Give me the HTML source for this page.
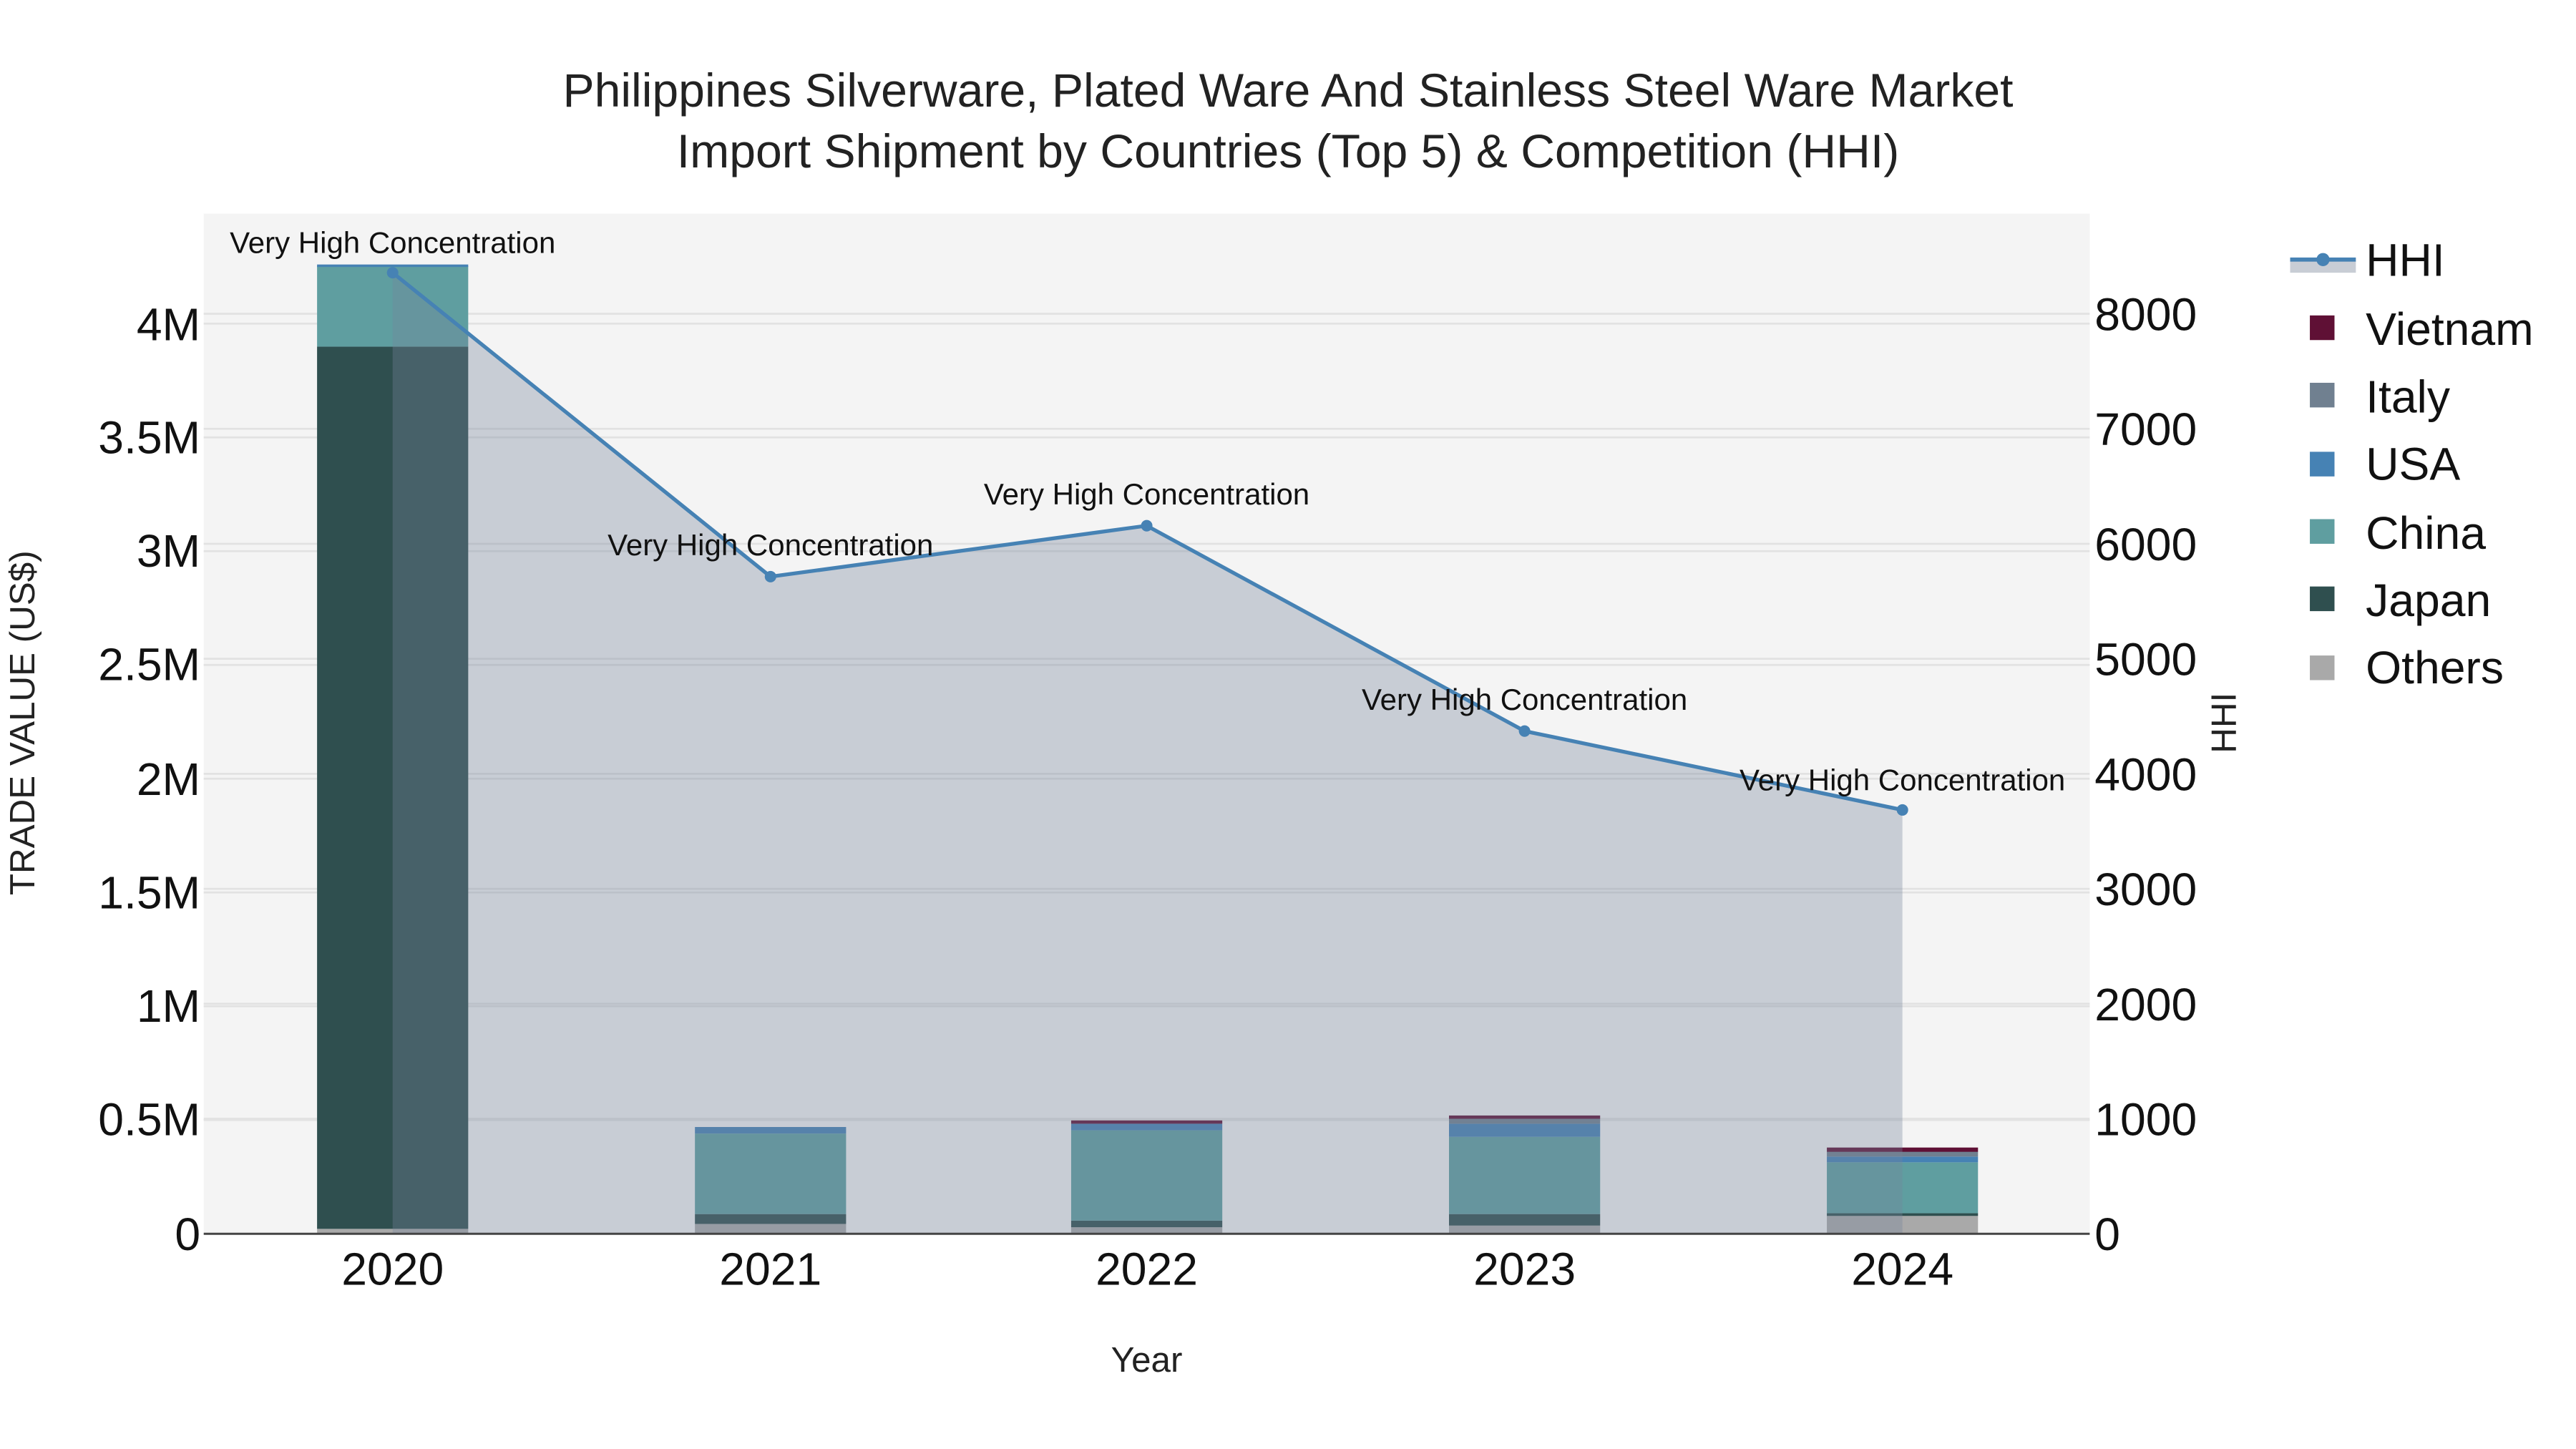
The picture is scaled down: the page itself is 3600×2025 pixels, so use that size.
<!DOCTYPE html>
<html><head><meta charset="utf-8"><style>html,body{margin:0;padding:0;background:#fff}svg{display:block}</style></head>
<body>
<svg width="3600" height="2025" viewBox="0 0 1568 882" xmlns="http://www.w3.org/2000/svg" font-family="Liberation Sans, sans-serif">
<rect width="1568" height="882" fill="#fff"/>
<rect x="124" y="130" width="1148" height="621" fill="#f4f4f4"/>
<g stroke="#e2e2e2" stroke-width="1.2">
<line x1="124" x2="1272" y1="681.75" y2="681.75"/><line x1="124" x2="1272" y1="612.5" y2="612.5"/><line x1="124" x2="1272" y1="543.25" y2="543.25"/><line x1="124" x2="1272" y1="474" y2="474"/><line x1="124" x2="1272" y1="404.75" y2="404.75"/><line x1="124" x2="1272" y1="335.5" y2="335.5"/><line x1="124" x2="1272" y1="266.25" y2="266.25"/><line x1="124" x2="1272" y1="197" y2="197"/>
<line x1="124" x2="1272" y1="681" y2="681"/><line x1="124" x2="1272" y1="611" y2="611"/><line x1="124" x2="1272" y1="541" y2="541"/><line x1="124" x2="1272" y1="471" y2="471"/><line x1="124" x2="1272" y1="401" y2="401"/><line x1="124" x2="1272" y1="331" y2="331"/><line x1="124" x2="1272" y1="261" y2="261"/><line x1="124" x2="1272" y1="191" y2="191"/>
</g>
<g>
<rect x="193" y="748" width="92" height="3" fill="#a9a9a9"/>
<rect x="193" y="211" width="92" height="537" fill="#2f4f4f"/>
<rect x="193" y="162" width="92" height="49" fill="#5f9ea0"/>
<rect x="193" y="161" width="92" height="1.5" fill="#4682b4"/>

<rect x="423" y="745" width="92" height="6" fill="#a9a9a9"/>
<rect x="423" y="739" width="92" height="6" fill="#2f4f4f"/>
<rect x="423" y="690" width="92" height="49" fill="#5f9ea0"/>
<rect x="423" y="686" width="92" height="4" fill="#4682b4"/>

<rect x="652" y="747" width="92" height="4" fill="#a9a9a9"/>
<rect x="652" y="743" width="92" height="4" fill="#2f4f4f"/>
<rect x="652" y="688" width="92" height="55" fill="#5f9ea0"/>
<rect x="652" y="684" width="92" height="4" fill="#4682b4"/>
<rect x="652" y="682" width="92" height="2" fill="#5f1035"/>

<rect x="882" y="746" width="92" height="5" fill="#a9a9a9"/>
<rect x="882" y="739" width="92" height="7" fill="#2f4f4f"/>
<rect x="882" y="692" width="92" height="47" fill="#5f9ea0"/>
<rect x="882" y="684" width="92" height="8" fill="#4682b4"/>
<rect x="882" y="681" width="92" height="3" fill="#708090"/>
<rect x="882" y="679" width="92" height="2" fill="#5f1035"/>

<rect x="1112" y="740" width="92" height="11" fill="#a9a9a9"/>
<rect x="1112" y="738.5" width="92" height="1.6" fill="#2f4f4f"/>
<rect x="1112" y="707.5" width="92" height="31" fill="#5f9ea0"/>
<rect x="1112" y="704" width="92" height="3.5" fill="#4682b4"/>
<rect x="1112" y="701" width="92" height="3" fill="#708090"/>
<rect x="1112" y="698.5" width="92" height="2.6" fill="#5f1035"/>
</g>
<polygon points="239,751 239,166 469,351 698,320 928,445 1158,493 1158,751" fill="rgb(118,133,155)" fill-opacity="0.35"/>
<polyline points="239,166 469,351 698,320 928,445 1158,493" fill="none" stroke="#4682b4" stroke-width="2.3"/>
<g fill="#4682b4"><circle cx="239" cy="166" r="3.5"/><circle cx="469" cy="351" r="3.5"/><circle cx="698" cy="320" r="3.5"/><circle cx="928" cy="445" r="3.5"/><circle cx="1158" cy="493" r="3.5"/></g>
<line x1="124" x2="1272" y1="751" y2="751" stroke="#444" stroke-width="1.3"/>
<g font-size="18.3" text-anchor="middle" fill="#111">
<text x="239" y="154">Very High Concentration</text>
<text x="469" y="338">Very High Concentration</text>
<text x="698" y="307">Very High Concentration</text>
<text x="928" y="432">Very High Concentration</text>
<text x="1158" y="481">Very High Concentration</text>
</g>
<g font-size="28.8" text-anchor="middle" fill="#222">
<text x="784" y="65">Philippines Silverware, Plated Ware And Stainless Steel Ware Market</text>
<text x="784" y="102">Import Shipment by Countries (Top 5) &amp; Competition (HHI)</text>
</g>
<g font-size="28" text-anchor="end" fill="#111">
<text x="122" y="761">0</text><text x="122" y="691">0.5M</text><text x="122" y="622">1M</text><text x="122" y="553">1.5M</text><text x="122" y="484">2M</text><text x="122" y="414">2.5M</text><text x="122" y="345">3M</text><text x="122" y="276">3.5M</text><text x="122" y="207">4M</text>
</g>
<g font-size="28" fill="#111">
<text x="1275" y="761">0</text><text x="1275" y="691">1000</text><text x="1275" y="621">2000</text><text x="1275" y="551">3000</text><text x="1275" y="481">4000</text><text x="1275" y="411">5000</text><text x="1275" y="341">6000</text><text x="1275" y="271">7000</text><text x="1275" y="201">8000</text>
</g>
<g font-size="28" text-anchor="middle" fill="#111">
<text x="239" y="782">2020</text><text x="469" y="782">2021</text><text x="698" y="782">2022</text><text x="928" y="782">2023</text><text x="1158" y="782">2024</text>
</g>
<text x="698" y="835" font-size="21.5" text-anchor="middle" fill="#222">Year</text>
<text transform="translate(21,440) rotate(-90)" font-size="21.5" text-anchor="middle" fill="#222">TRADE VALUE (US$)</text>
<text transform="translate(1361,440) rotate(-90)" font-size="21.5" text-anchor="middle" fill="#222">HHI</text>
<rect x="1394" y="159" width="40" height="7" fill="#c8cdd5"/>
<line x1="1394" x2="1434" y1="158" y2="158" stroke="#4682b4" stroke-width="2.5"/>
<circle cx="1414" cy="158" r="4" fill="#4682b4"/>
<rect x="1406" y="192" width="15" height="15" fill="#5f1035"/>
<rect x="1406" y="233" width="15" height="15" fill="#708090"/>
<rect x="1406" y="275" width="15" height="15" fill="#4682b4"/>
<rect x="1406" y="316" width="15" height="15" fill="#5f9ea0"/>
<rect x="1406" y="357" width="15" height="15" fill="#2f4f4f"/>
<rect x="1406" y="399" width="15" height="15" fill="#a9a9a9"/>
<g font-size="28" fill="#111">
<text x="1440" y="168">HHI</text><text x="1440" y="210">Vietnam</text><text x="1440" y="251">Italy</text><text x="1440" y="292">USA</text><text x="1440" y="334">China</text><text x="1440" y="375">Japan</text><text x="1440" y="416">Others</text>
</g>
</svg>
</body></html>
